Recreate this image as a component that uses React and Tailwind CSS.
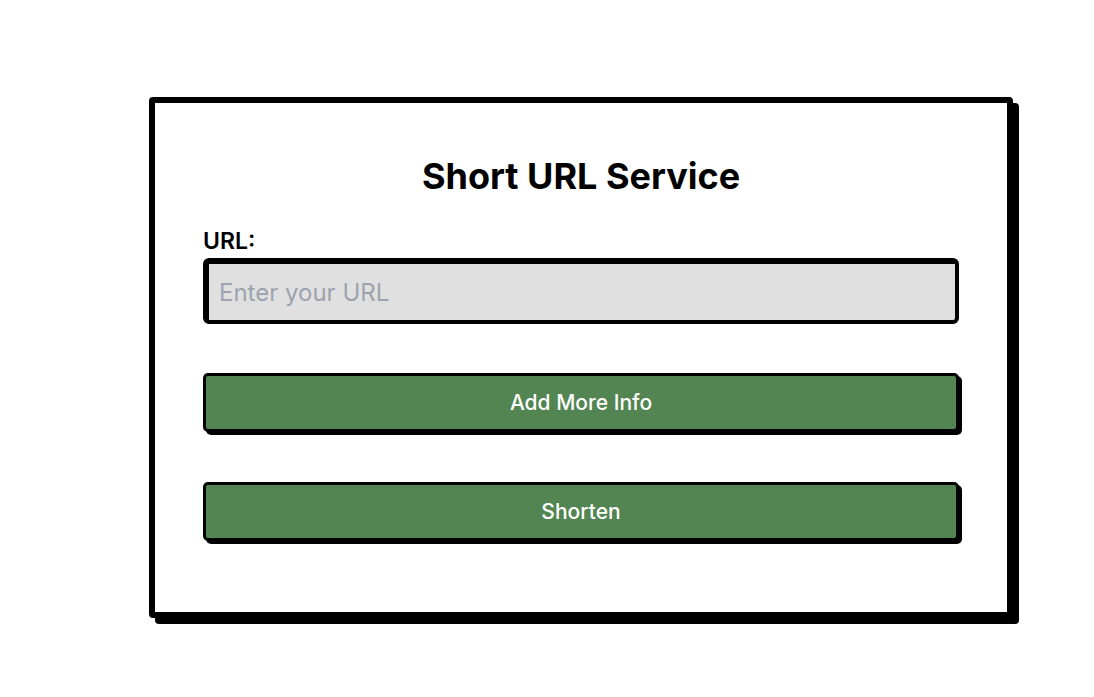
import React from 'react';

export default function App() {
    return (
        <div className="min-h-screen bg-white font-['Inter',sans-serif] pt-[97px] pl-[149px]">
            <div className="w-[864px] bg-white border-[6px] border-black rounded-[4px] shadow-[6px_6px_0_0_#000] px-[48px] pt-[48px] pb-[71px]">
                <h1 className="text-center text-[36px] font-bold text-black leading-[44px] mt-[3px]">
                    Short URL Service
                </h1>

                <label className="block mt-[29px] text-[23px] font-semibold text-black leading-[28px]">
                    URL:
                </label>
                <input
                    type="text"
                    placeholder="Enter your URL"
                    className="mt-[3px] block w-full h-[66px] bg-[#e0e0e0] border-black border-l-[6px] border-t-[6px] border-r-[4px] border-b-[4px] rounded-[6px] px-[10px] text-[24px] placeholder:text-[#9ca3af] outline-none"
                />

                <button className="mt-[49px] block w-full h-[59px] bg-[#538553] border-[3px] border-black rounded-[5px] shadow-[3px_3px_0_0_#000] text-white text-[21px] font-medium">
                    Add More Info
                </button>

                <button className="mt-[50px] block w-full h-[59px] bg-[#538553] border-[3px] border-black rounded-[5px] shadow-[3px_3px_0_0_#000] text-white text-[21px] font-medium">
                    Shorten
                </button>
            </div>
        </div>
    );
}
